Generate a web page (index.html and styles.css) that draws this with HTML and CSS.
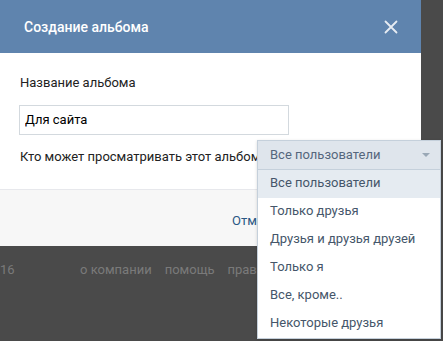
FILE: index.html
```html
<!DOCTYPE html>
<html lang="ru">
<head>
    <meta charset="UTF-8">
    <meta name="viewport" content="width=device-width, initial-scale=1.0">
    <title>Создание альбома</title>
    <link rel="stylesheet" href="styles.css">
</head>
<body>

    <div class="box">
        <div class="box-header">
            <span class="box-title">Создание альбома</span>
            <span class="box-close">
                <svg width="14" height="14" viewBox="0 0 14 14">
                    <path d="M1.5 1.5 L12.5 12.5 M12.5 1.5 L1.5 12.5" stroke="#fff" stroke-width="1.8" stroke-linecap="round" fill="none"/>
                </svg>
            </span>
        </div>
        <div class="box-body">
            <div class="field-label">Название альбома</div>
            <input class="text-input" type="text" value="Для сайта">
            <div class="privacy-row">Кто может просматривать этот альбом?</div>
        </div>
        <div class="box-footer">
            <a href="#" class="cancel-btn">Отмена</a>
            <button class="create-btn">Создать альбом</button>
        </div>
    </div>

    <div class="page-footer">
        <span class="copy">16</span>
        <a href="#">о компании</a>
        <a href="#">помощь</a>
        <a href="#">правила</a>
    </div>

    <!-- выпадающий список приватности -->
    <div class="dropdown">
        <div class="dropdown-selected">
            <span>Все пользователи</span>
            <span class="dropdown-arrow"></span>
        </div>
        <div class="dropdown-item active">Все пользователи</div>
        <div class="dropdown-item">Только друзья</div>
        <div class="dropdown-item">Друзья и друзья друзей</div>
        <div class="dropdown-item">Только я</div>
        <div class="dropdown-item">Все, кроме..</div>
        <div class="dropdown-item">Некоторые друзья</div>
    </div>

</body>
</html>
```

FILE: styles.css
```css
body {
    margin: 0;
    background: #4a4a4a;
    font-family: Roboto, "Open Sans", Arial, sans-serif;
    font-size: 13px;
    height: 341px;
    overflow: hidden;
    position: relative;
}

.box {
    width: 421px;
    background: #fff;
}

.box-header {
    height: 53px;
    background: #5f84ae;
    display: flex;
    align-items: center;
    justify-content: space-between;
    padding: 0 24px;
}

.box-title {
    color: #fff;
    font-size: 14px;
    font-weight: 500;
}

.box-close {
    display: flex;
    margin-right: -1px;
    opacity: 0.85;
}

.box-body {
    padding: 22px 20px 24px;
}

.field-label {
    line-height: 16px;
    color: #222;
}

.text-input {
    display: block;
    box-sizing: border-box;
    width: 270px;
    height: 30px;
    margin: 14px 0 14px -1px;
    padding: 0 5px 1px;
    border: 1px solid #d3d9de;
    font-family: inherit;
    font-size: 13px;
    color: #000;
    outline: none;
}

.privacy-row {
    line-height: 16px;
    color: #222;
}

.box-footer {
    height: 57px;
    box-sizing: border-box;
    border-top: 1px solid #e7e8ec;
    background: #f7f7f7;
    display: flex;
    align-items: center;
    padding-left: 232px;
    gap: 20px;
}

.cancel-btn {
    color: #2a5885;
    text-decoration: none;
    margin-top: 4px;
}

.create-btn {
    background: #5e81a8;
    color: #fff;
    border: none;
    border-radius: 4px;
    padding: 8px 16px;
    font-family: inherit;
    font-size: 13px;
}

.page-footer {
    display: flex;
    padding-top: 16px;
    color: #7a7a7a;
    line-height: 16px;
}

.page-footer .copy {
    width: 80px;
}

.page-footer a {
    color: #7a7a7a;
    text-decoration: none;
    margin-right: 13px;
}

.dropdown {
    position: absolute;
    left: 257px;
    top: 140px;
    width: 184px;
    box-sizing: border-box;
    background: #fff;
    border: 1px solid #c5d0db;
    box-shadow: 0 1px 3px rgba(0, 0, 0, 0.15);
}

.dropdown-selected {
    height: 29px;
    box-sizing: border-box;
    background: #dfe5ec;
    border-bottom: 1px solid #c5d0db;
    display: flex;
    align-items: center;
    justify-content: space-between;
    padding: 0 10px 2px 12px;
    color: #55677d;
}

.dropdown-arrow {
    width: 0;
    height: 0;
    margin-top: 2px;
    border-left: 4px solid transparent;
    border-right: 4px solid transparent;
    border-top: 4px solid #9aa8b6;
}

.dropdown-item {
    height: 28px;
    line-height: 25px;
    padding-left: 12px;
    color: #45566a;
}

.dropdown-item.active {
    background: #e5ebf1;
}
```
